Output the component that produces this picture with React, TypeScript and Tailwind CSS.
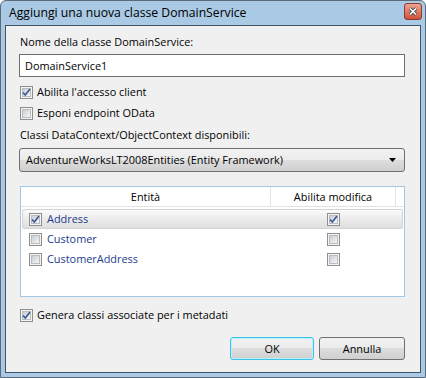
import React from 'react'

const CheckBox = ({ checked }: { checked?: boolean }) => (
  <span className="relative flex h-[13px] w-[13px] shrink-0 items-center justify-center border border-[#8e8f8f] bg-[#f4f4f4]">
    <span className="h-[9px] w-[9px] border border-[#b9bdc3] bg-linear-to-br from-[#c9cdd2] to-[#f6f6f6]" />
    {checked && (
      <svg className="absolute left-0 top-0" width="11" height="11" viewBox="0 0 11 11">
        <path d="M2 5.5 L4.3 8 L9 2" fill="none" stroke="#3d5c95" strokeWidth="1.7" />
      </svg>
    )}
  </span>
)

const CheckRow = ({ label, checked }: { label: string; checked?: boolean }) => (
  <div className="ml-[1px] flex h-[16px] items-center gap-[4px]">
    <CheckBox checked={checked} />
    <span>{label}</span>
  </div>
)

const entities = [
  { name: 'Address', selected: true, edit: true },
  { name: 'Customer', selected: false, edit: false },
  { name: 'CustomerAddress', selected: false, edit: false },
]

const btn =
  'flex h-[23px] items-center rounded-[3px] bg-[linear-gradient(#f2f2f2_0%,#ebebeb_50%,#dddddd_50%,#cfcfcf_100%)]'

export default function App() {
  return (
    <div
      className="flex h-[378px] w-[426px] flex-col rounded-t-[6px] border border-[#5b6b7a] bg-[#a9c9e4] px-[4px] pb-[4px] text-[10.9px] leading-[16px] text-black"
      style={{ fontFamily: "'Segoe UI', 'Open Sans', sans-serif" }}
    >
      {/* title bar */}
      <div className="flex h-[24px] shrink-0 items-center justify-between pl-[4px]">
        <span className="text-[12.2px] leading-[18px]">Aggiungi una nuova classe DomainService</span>
        <div className="mr-[-1px] mt-[-3px] flex h-[17px] w-[18px] items-center justify-center rounded-[3px] border border-[#8a3c30] bg-linear-to-b from-[#eda395] to-[#d0503a]">
          <svg width="10" height="9" viewBox="0 0 10 9">
            <path d="M2 1.5 L8 7.5 M8 1.5 L2 7.5" stroke="#4a4a4a" strokeWidth="3.2" />
            <path d="M2 1.5 L8 7.5 M8 1.5 L2 7.5" stroke="#ffffff" strokeWidth="1.6" />
          </svg>
        </div>
      </div>

      {/* client area */}
      <div className="flex flex-1 flex-col border border-[#3f5669] bg-[#f0f0f0] pl-[13px] pr-[15px]">
        <div className="ml-[1px] mt-[8px] h-[16px]">Nome della classe DomainService:</div>
        <div className="mt-[4px] flex h-[23px] items-center border border-[#6e6e6e] bg-white pl-[5px]">
          DomainService1
        </div>

        <div className="mt-[7px]">
          <CheckRow label="Abilita l'accesso client" checked />
        </div>
        <div className="mt-[5px]">
          <CheckRow label="Esponi endpoint OData" />
        </div>

        <div className="ml-[1px] mt-[6px] h-[16px]">Classi DataContext/ObjectContext disponibili:</div>
        <div className={`${btn} mt-[5px] h-[24px] justify-between border border-[#707070] pl-[6px] pr-[7px]`}>
          <span>AdventureWorksLT2008Entities (Entity Framework)</span>
          <svg width="8" height="5" viewBox="0 0 8 5">
            <path d="M0 0 H7 L3.5 4 Z" fill="#000" />
          </svg>
        </div>

        {/* entity table */}
        <div className="ml-[1px] mt-[14px] flex h-[111px] flex-col border border-[#a3c6e3] bg-white">
          <div className="flex h-[20px] shrink-0 border-b border-[#e3e3e3]">
            <div className="flex w-[250px] items-center justify-center border-r border-[#e3e3e3]">Entità</div>
            <div className="flex w-[125px] items-center justify-center border-r border-[#e3e3e3]">Abilita modifica</div>
            <div className="flex-1" />
          </div>
          <div className="flex flex-col pt-[2px]">
            {entities.map((e) => (
              <div
                key={e.name}
                className={`mx-[1px] flex h-[20px] items-center rounded-[2px] border ${
                  e.selected
                    ? 'border-[#d4d4d4] bg-linear-to-b from-[#fafafa] to-[#dedede]'
                    : 'border-transparent'
                }`}
              >
                <div className="flex w-[248px] items-center gap-[5px] pl-[6px] text-[#1b3c8c]">
                  <CheckBox checked={e.selected} />
                  <span>{e.name}</span>
                </div>
                <div className="flex w-[125px] justify-center">
                  <CheckBox checked={e.edit} />
                </div>
              </div>
            ))}
          </div>
        </div>

        <div className="mt-[10px]">
          <CheckRow label="Genera classi associate per i metadati" checked />
        </div>

        <div className="mt-[14px] flex justify-end gap-[5px]">
          <div className={`${btn} w-[84px] justify-center border border-[#3cc3ec] shadow-[inset_0_0_0_1px_#bdeefa]`}>OK</div>
          <div className={`${btn} w-[86px] justify-center border border-[#707070]`}>Annulla</div>
        </div>
      </div>
    </div>
  )
}
